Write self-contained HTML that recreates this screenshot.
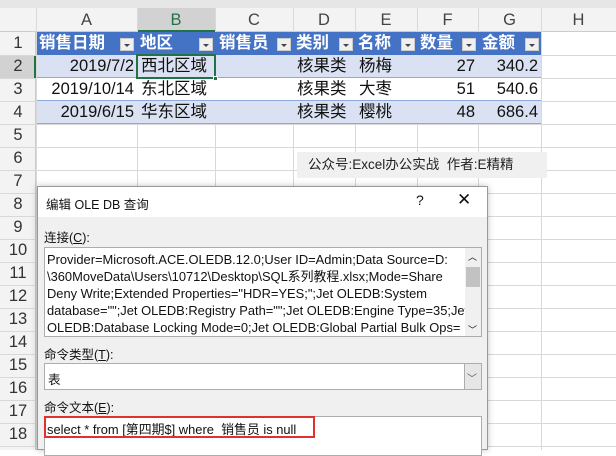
<!DOCTYPE html><html><head><style>
body{margin:0;width:616px;height:450px;overflow:hidden;background:#fff;font-family:"Liberation Sans","Noto Sans CJK SC",sans-serif;position:relative}
.a{position:absolute;box-sizing:border-box}
.vl{position:absolute;top:8px;height:442px;width:1px;background:#d8d8d8}
.hl{position:absolute;left:0;width:616px;height:1px;background:#d8d8d8}
.rn{position:absolute;left:0;width:36px;text-align:center;font-size:16.5px;color:#333;line-height:23px}
.ch{position:absolute;top:8px;height:24px;line-height:24px;text-align:center;font-size:16.5px;color:#444}
.c{position:absolute;height:23px;line-height:23px;font-size:16.5px;color:#111;white-space:nowrap}
.h{color:#fff;font-weight:bold}
.dd{position:absolute;width:14px;height:13px;background:#f0f0f0;border:1px solid #ccc;box-sizing:border-box}
.dd:after{content:"";position:absolute;left:3px;top:5px;border-left:3px solid transparent;border-right:3px solid transparent;border-top:3px solid #444}
.t{font-size:12.5px;color:#111;position:absolute;white-space:nowrap}
</style></head><body>
<div class="a" style="left:0;top:0;width:616px;height:8px;background:#e6e6e6"></div>
<div class="a" style="left:0;top:8px;width:616px;height:24px;background:#f3f3f3;border-bottom:1px solid #ccc"></div>
<div class="a" style="left:137px;top:8px;width:78px;height:24px;background:#d2d2d2;border-bottom:2px solid #217346"></div>
<div class="a" style="left:0;top:32px;width:36px;height:418px;background:#f3f3f3;border-right:1px solid #ccc"></div>
<div class="a" style="left:0;top:55px;width:36px;height:23px;background:#d2d2d2;border-right:2px solid #217346"></div>
<div class="vl" style="left:137px"></div><div class="vl" style="left:215px"></div><div class="vl" style="left:293px"></div><div class="vl" style="left:355px"></div><div class="vl" style="left:417px"></div><div class="vl" style="left:478px"></div><div class="vl" style="left:541px"></div><div class="vl" style="left:36px"></div>
<div class="hl" style="top:55px"></div><div class="hl" style="top:78px"></div><div class="hl" style="top:101px"></div><div class="hl" style="top:124px"></div><div class="hl" style="top:147px"></div><div class="hl" style="top:170px"></div><div class="hl" style="top:193px"></div><div class="hl" style="top:216px"></div><div class="hl" style="top:239px"></div><div class="hl" style="top:262px"></div><div class="hl" style="top:285px"></div><div class="hl" style="top:308px"></div><div class="hl" style="top:331px"></div><div class="hl" style="top:354px"></div><div class="hl" style="top:377px"></div><div class="hl" style="top:400px"></div><div class="hl" style="top:423px"></div><div class="hl" style="top:446px"></div>
<div class="ch" style="left:36px;width:101px">A</div><div class="ch" style="left:137px;width:78px;color:#217346">B</div><div class="ch" style="left:215px;width:78px">C</div><div class="ch" style="left:293px;width:62px">D</div><div class="ch" style="left:355px;width:62px">E</div><div class="ch" style="left:417px;width:61px">F</div><div class="ch" style="left:478px;width:63px">G</div><div class="ch" style="left:541px;width:75px">H</div>
<div class="rn" style="top:32px">1</div><div class="rn" style="top:55px">2</div><div class="rn" style="top:78px">3</div><div class="rn" style="top:101px">4</div><div class="rn" style="top:124px">5</div><div class="rn" style="top:147px">6</div><div class="rn" style="top:170px">7</div><div class="rn" style="top:193px">8</div><div class="rn" style="top:216px">9</div><div class="rn" style="top:239px">10</div><div class="rn" style="top:262px">11</div><div class="rn" style="top:285px">12</div><div class="rn" style="top:308px">13</div><div class="rn" style="top:331px">14</div><div class="rn" style="top:354px">15</div><div class="rn" style="top:377px">16</div><div class="rn" style="top:400px">17</div><div class="rn" style="top:423px">18</div>
<div class="a" style="left:37px;top:32px;width:504px;height:23px;background:#4472c4"></div>
<div class="a" style="left:37px;top:55px;width:504px;height:23px;background:#d9e1f2;border-bottom:1px solid #8ea9db"></div>
<div class="a" style="left:37px;top:78px;width:504px;height:23px;background:#fff;border-bottom:1px solid #8ea9db"></div>
<div class="a" style="left:37px;top:101px;width:504px;height:23px;background:#d9e1f2;border-bottom:1px solid #8ea9db"></div>
<div class="c h" style="left:39px;top:32px">销售日期</div><div class="dd" style="left:120px;top:38px"></div>
<div class="c h" style="left:140px;top:32px">地区</div><div class="dd" style="left:199px;top:38px"></div>
<div class="c h" style="left:219px;top:32px">销售员</div><div class="dd" style="left:277px;top:38px"></div>
<div class="c h" style="left:296px;top:32px">类别</div><div class="dd" style="left:339px;top:38px"></div>
<div class="c h" style="left:358px;top:32px">名称</div><div class="dd" style="left:401px;top:38px"></div>
<div class="c h" style="left:420px;top:32px">数量</div><div class="dd" style="left:462px;top:38px"></div>
<div class="c h" style="left:482px;top:32px">金额</div><div class="dd" style="left:525px;top:38px"></div>
<div class="c" style="left:37px;top:55px;width:97px;text-align:right">2019/7/2</div><div class="c" style="left:141px;top:55px">西北区域</div><div class="c" style="left:297px;top:55px">核果类</div><div class="c" style="left:359px;top:55px">杨梅</div><div class="c" style="left:417px;top:55px;width:58px;text-align:right">27</div><div class="c" style="left:478px;top:55px;width:60px;text-align:right">340.2</div>
<div class="c" style="left:37px;top:78px;width:97px;text-align:right">2019/10/14</div><div class="c" style="left:141px;top:78px">东北区域</div><div class="c" style="left:297px;top:78px">核果类</div><div class="c" style="left:359px;top:78px">大枣</div><div class="c" style="left:417px;top:78px;width:58px;text-align:right">51</div><div class="c" style="left:478px;top:78px;width:60px;text-align:right">540.6</div>
<div class="c" style="left:37px;top:101px;width:97px;text-align:right">2019/6/15</div><div class="c" style="left:141px;top:101px">华东区域</div><div class="c" style="left:297px;top:101px">核果类</div><div class="c" style="left:359px;top:101px">樱桃</div><div class="c" style="left:417px;top:101px;width:58px;text-align:right">48</div><div class="c" style="left:478px;top:101px;width:60px;text-align:right">686.4</div>
<div class="a" style="left:136px;top:54px;width:80px;height:25px;border:2px solid #217346"></div>
<div class="a" style="left:213px;top:76px;width:5px;height:5px;background:#217346;border:1px solid #fff"></div>
<div class="a" style="left:297px;top:152px;width:250px;height:26px;background:#f0f0f0;font-size:13.5px;line-height:26px;padding-left:11px;color:#222">公众号:Excel办公实战&nbsp;&nbsp;作者:E精精</div>
<div class="a" style="left:37px;top:186px;width:451px;height:264px;background:#f0f0f0;border:1px solid #999;box-shadow:0 0 6px rgba(0,0,0,.25)"></div>
<div class="a" style="left:38px;top:187px;width:449px;height:30px;background:#fff"></div>
<div class="t" style="left:46px;top:194px">编辑 OLE DB 查询</div>
<div class="t" style="left:416px;top:192px;font-size:14px">?</div>
<div class="t" style="left:457px;top:190px;font-size:17px">✕</div>
<div class="t" style="left:44px;top:227px">连接(<u>C</u>):</div>
<div class="a" style="left:44px;top:247px;width:438px;height:90px;background:#fff;border:1px solid #adadad"></div>
<div class="t" style="left:47px;top:251px;line-height:17px;font-size:12.9px">Provider=Microsoft.ACE.OLEDB.12.0;User ID=Admin;Data Source=D:<br>\360MoveData\Users\10712\Desktop\SQL系列教程.xlsx;Mode=Share<br>Deny Write;Extended Properties="HDR=YES;";Jet OLEDB:System<br>database="";Jet OLEDB:Registry Path="";Jet OLEDB:Engine Type=35;Jet<br>OLEDB:Database Locking Mode=0;Jet OLEDB:Global Partial Bulk Ops=</div>
<div class="a" style="left:465px;top:248px;width:16px;height:88px;background:#f0f0f0"></div>
<div class="a" style="left:466px;top:267px;width:14px;height:20px;background:#c2c2c2"></div>
<div class="t" style="left:468px;top:250px;font-size:9px">︿</div><div class="t" style="left:468px;top:323px;font-size:9px">﹀</div>
<div class="t" style="left:44px;top:344px">命令类型(<u>T</u>):</div>
<div class="a" style="left:44px;top:363px;width:438px;height:27px;background:#fff;border:1px solid #adadad"></div>
<div class="t" style="left:48px;top:369px">表</div>
<div class="a" style="left:464px;top:364px;width:17px;height:25px;background:#e6e6e6;border-left:1px solid #adadad"></div>
<div class="t" style="left:467px;top:370px;font-size:10px;color:#555">﹀</div>
<div class="t" style="left:44px;top:397px">命令文本(<u>E</u>):</div>
<div class="a" style="left:44px;top:416px;width:438px;height:40px;background:#fff;border:1px solid #adadad"></div>
<div class="t" style="left:47px;top:419px;font-size:12.9px">select * from [第四期$] where &nbsp;销售员 is null</div>
<div class="a" style="left:44px;top:416px;width:271px;height:22px;border:2px solid #e03131"></div>
</body></html>
